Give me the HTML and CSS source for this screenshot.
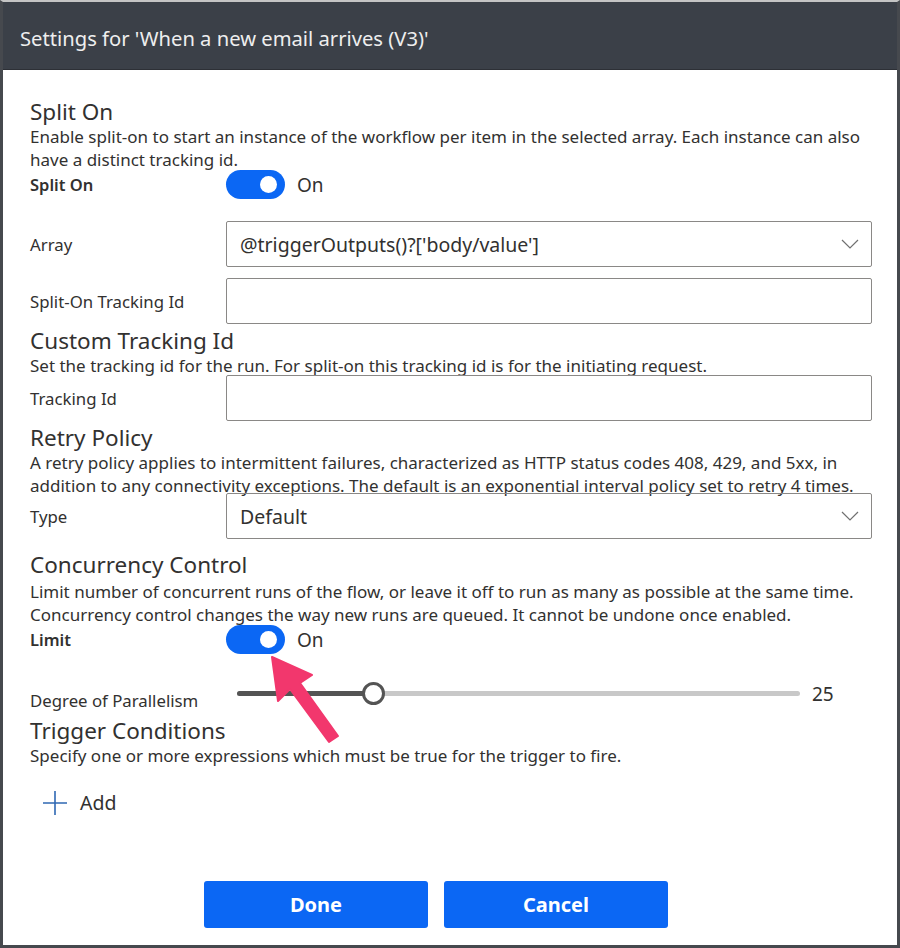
FILE: index.html
```html
<!DOCTYPE html>
<html lang="en">
<head>
    <meta charset="UTF-8">
    <title>Settings</title>
    <link rel="stylesheet" href="styles.css">
</head>
<body>
<div class="dialog">
    <div class="dialog-head">Settings for 'When a new email arrives (V3)'</div>
    <div class="dialog-body">
        <!--split on-->
        <div class="group">
            <h2>Split On</h2>
            <p class="desc">Enable split-on to start an instance of the workflow per item in the selected array. Each instance can also<br>have a distinct tracking id.</p>
            <div class="row row-toggle">
                <label class="strong">Split On</label>
                <div class="switch"><span class="toggle"></span><span class="switch-text">On</span></div>
            </div>
            <div class="row row-first">
                <label>Array</label>
                <div class="field select">
                    <span>@triggerOutputs()?['body/value']</span>
                    <svg class="chev" width="18" height="10" viewBox="0 0 18 10"><polyline points="1,1 9,9 17,1" fill="none" stroke="#707070" stroke-width="1.2"/></svg>
                </div>
            </div>
            <div class="row">
                <label>Split-On Tracking Id</label>
                <div class="field"></div>
            </div>
        </div>
        <!--custom tracking-->
        <div class="group">
            <h2>Custom Tracking Id</h2>
            <p class="desc">Set the tracking id for the run. For split-on this tracking id is for the initiating request.</p>
            <div class="row row-close">
                <label>Tracking Id</label>
                <div class="field"></div>
            </div>
        </div>
        <!--retry-->
        <div class="group">
            <h2>Retry Policy</h2>
            <p class="desc">A retry policy applies to intermittent failures, characterized as HTTP status codes 408, 429, and 5xx, in<br>addition to any connectivity exceptions. The default is an exponential interval policy set to retry 4 times.</p>
            <div class="row row-tight">
                <label>Type</label>
                <div class="field select">
                    <span>Default</span>
                    <svg class="chev" width="18" height="10" viewBox="0 0 18 10"><polyline points="1,1 9,9 17,1" fill="none" stroke="#707070" stroke-width="1.2"/></svg>
                </div>
            </div>
        </div>
        <!--concurrency-->
        <div class="group group-wide">
            <h2>Concurrency Control</h2>
            <p class="desc">Limit number of concurrent runs of the flow, or leave it off to run as many as possible at the same time.<br>Concurrency control changes the way new runs are queued. It cannot be undone once enabled.</p>
            <div class="row row-toggle">
                <label class="strong">Limit</label>
                <div class="switch"><span class="toggle"></span><span class="switch-text">On</span></div>
            </div>
            <div class="row row-slider">
                <label>Degree of Parallelism</label>
                <div class="slider">
                    <div class="track"><span class="fill"></span><span class="thumb"></span></div>
                    <span class="slider-val">25</span>
                </div>
            </div>
        </div>
        <!--trigger conditions-->
        <div class="group">
            <h2>Trigger Conditions</h2>
            <p class="desc">Specify one or more expressions which must be true for the trigger to fire.</p>
            <div class="add">
                <svg width="26" height="26" viewBox="0 0 26 26"><path d="M13 1V25M1 13H25" stroke="#2f68b3" stroke-width="1.6" fill="none"/></svg>
                <span>Add</span>
            </div>
        </div>
        <div class="actions">
            <button class="btn">Done</button>
            <button class="btn">Cancel</button>
        </div>
    </div>
</div>
<svg class="pointer" width="900" height="948" viewBox="0 0 900 948">
    <polygon points="272,657 312,675 300,683 338,736 329,742 290,689 278,701" fill="#f2376d" stroke="#f2376d" stroke-width="2" stroke-linejoin="round"/>
</svg>
</body>
</html>
```

FILE: styles.css
```css
*{margin:0;padding:0;box-sizing:border-box;}
body{
    font-family: "Noto Sans", "Open Sans", sans-serif;
    color:#323130;
    background:#fff;
}
.dialog{
    width:900px;
    height:948px;
    border:3px solid #46494e;
    border-top:2px solid #c4c4c4;
    display:flex;
    flex-direction:column;
}
.dialog-head{
    height:68px;
    background:#3b4048;
    color:#eeeeee;
    font-size:20.2px;
    display:flex;
    align-items:center;
    padding:5px 0 0 17px;
    border-bottom:1px solid #2d3036;
}
.dialog-body{
    flex:1;
    padding:29px 25px 0 27px;
}
.group{
    margin-bottom:4px;
}
.group-wide{
    margin-top:13px;
}
h2{
    font-size:22.5px;
    font-weight:400;
    line-height:26px;
}
.desc{
    font-size:17px;
    line-height:23px;
    white-space:nowrap;
}
.group-wide .desc{
    margin-top:2px;
}
.row{
    display:grid;
    grid-template-columns:196px 1fr;
    align-items:center;
    margin-bottom:11px;
}
.group .row:last-child{
    margin-bottom:0;
}
.row label{
    font-size:16.8px;
}
.row label.strong{
    font-weight:600;
    font-size:16.5px;
}
.row-toggle{
    height:28px;
    margin-top:-1px;
}
.row-first{
    margin-top:23px;
}
.row-close{
    margin-top:-2px;
}
.row-tight{
    margin-top:-4px;
}
.switch{
    display:flex;
    align-items:center;
    gap:12px;
}
.toggle{
    position:relative;
    width:59px;
    height:29px;
    border-radius:15px;
    background:#0b67f4;
}
.toggle::after{
    content:"";
    position:absolute;
    right:8px;
    top:6px;
    width:17px;
    height:17px;
    border-radius:50%;
    background:#fff;
}
.switch-text{
    font-size:19px;
}
.field{
    height:46px;
    border:1px solid #8a8886;
    border-radius:2px;
    display:flex;
    align-items:center;
    justify-content:space-between;
    padding:0 12px 0 13px;
    font-size:19.5px;
}
.chev{
    display:block;
}
.row-slider{
    margin-top:33px;
    height:28px;
}
.slider{
    display:flex;
    align-items:center;
    padding-left:11px;
}
.track{
    position:relative;
    width:563px;
    height:5px;
    border-radius:3px;
    background:#c8c8c8;
    margin-top:-13px;
}
.fill{
    position:absolute;
    left:0;
    top:0;
    width:136px;
    height:5px;
    border-radius:3px;
    background:#545454;
}
.thumb{
    position:absolute;
    left:125px;
    top:-9px;
    width:23px;
    height:23px;
    border-radius:50%;
    background:#fff;
    border:3px solid #545454;
}
.slider-val{
    font-size:19px;
    margin-left:12px;
    margin-top:-13px;
}
.add{
    display:flex;
    align-items:center;
    gap:12px;
    margin:22px 0 0 12px;
    font-size:19.5px;
}
.add svg{
    display:block;
}
.actions{
    display:flex;
    gap:16px;
    padding-left:174px;
    margin-top:65px;
}
.btn{
    width:224px;
    height:47px;
    border:none;
    border-radius:3px;
    background:#0b67f4;
    color:#fff;
    font-family: "Noto Sans", sans-serif;
    font-size:20px;
    font-weight:700;
}
.pointer{
    position:absolute;
    left:0;
    top:0;
    pointer-events:none;
}
```
